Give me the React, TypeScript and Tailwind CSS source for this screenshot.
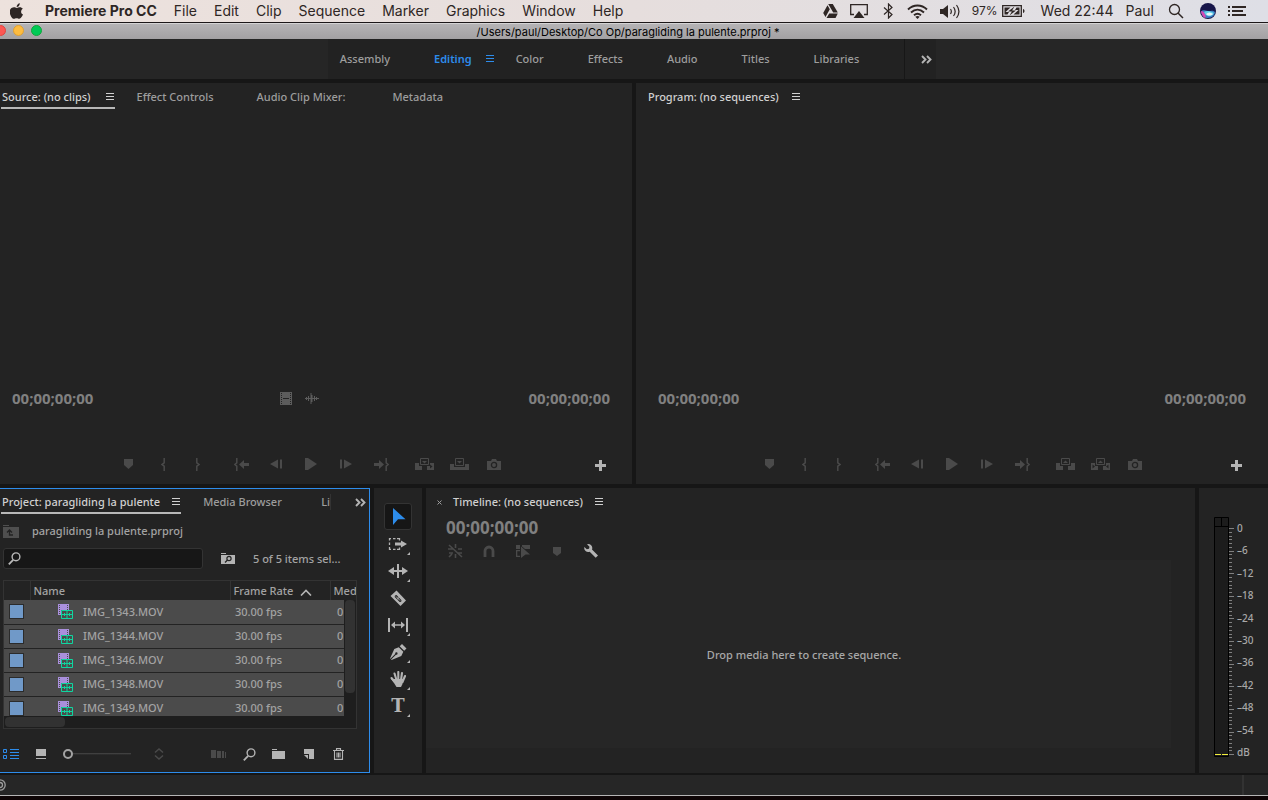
import React from 'react';

type IconProps = { w: number; h: number; className?: string; children: React.ReactNode };

const Icon = ({ w, h, className = '', children }: IconProps) => (
  <svg width={w} height={h} viewBox={`0 0 ${w} ${h}`} fill="currentColor" aria-hidden="true" className={`shrink-0 ${className}`}>
    {children}
  </svg>
);

/* ---------- small shared glyphs ---------- */

const Burger = ({ className = '' }: { className?: string }) => (
  <Icon w={8} h={8} className={className}>
    <path d="M0 0h8v1H0zM0 3h8v1H0zM0 6h8v1H0z" />
  </Icon>
);

const Chevrons = () => (
  <Icon w={11} h={9} className="text-[#b4b4b4]">
    <path d="M1 1l3.5 3.5L1 8M6 1l3.5 3.5L6 8" fill="none" stroke="currentColor" strokeWidth="1.9" />
  </Icon>
);

const Marker = () => (
  <Icon w={9} h={10}>
    <path d="M0 0h9v6L4.5 10 0 6z" />
  </Icon>
);

const MarkIn = () => (
  <Icon w={4} h={13}>
    <path d="M3.2 0v4.8L1 6.5l2.2 1.7V13" fill="none" stroke="currentColor" strokeWidth="1.5" />
  </Icon>
);

const MarkOut = () => (
  <Icon w={4} h={13}>
    <path d="M.8 0v4.8L3 6.5.8 8.2V13" fill="none" stroke="currentColor" strokeWidth="1.5" />
  </Icon>
);

const GoToIn = () => (
  <Icon w={15} h={13}>
    <path d="M2.8 0v4.8L.8 6.5l2 1.7V13" fill="none" stroke="currentColor" strokeWidth="1.5" />
    <path d="M5 6.5L10 2v3h5v3h-5v3z" />
  </Icon>
);

const GoToOut = () => (
  <Icon w={15} h={13}>
    <path d="M12.2 0v4.8l2 1.7-2 1.7V13" fill="none" stroke="currentColor" strokeWidth="1.5" />
    <path d="M10 6.5L5 2v3H0v3h5v3z" />
  </Icon>
);

const StepBack = () => (
  <Icon w={12} h={10}>
    <path d="M0 5l8-4.500v9zM10 .500h2v9h-2z" />
  </Icon>
);

const StepForward = () => (
  <Icon w={12} h={10}>
    <path d="M12 5L4 .500v9zM0 .500h2v9H0z" />
  </Icon>
);

const Play = () => (
  <Icon w={12} h={12}>
    <path d="M0 0h3l9 6-9 6H0z" />
  </Icon>
);

const Insert = () => (
  <Icon w={19} h={12}>
    <path d="M0 5h4v3h3v4H0zM12 8h3V5h4v7h-7z" />
    <path d="M5.500.500h8v6h-8z" fill="none" stroke="currentColor" />
    <path d="M7 3h5L9.500 5.500z" />
    <path d="M15 6.500v4l2.500-2z" fill="#232323" />
  </Icon>
);

const Overwrite = () => (
  <Icon w={19} h={12}>
    <path d="M0 6h4v3h11V6h4v6H0z" />
    <path d="M5.500.500h8v7h-8z" fill="none" stroke="currentColor" />
    <path d="M7 3h5L9.500 5.500z" />
  </Icon>
);

const Lift = () => (
  <Icon w={19} h={12}>
    <path d="M0 5h4v3h3v4H0zM12 8h3V5h4v7h-7z" />
    <path d="M5.500.500h8v6h-8z" fill="none" stroke="currentColor" />
    <path d="M7 5h5L9.500 2.500z" />
  </Icon>
);

const Extract = () => (
  <Icon w={19} h={12}>
    <path d="M0 5h4v3h3v4H0zM12 8h3V5h4v7h-7z" />
    <path d="M5.500.500h8v6h-8z" fill="none" stroke="currentColor" />
    <path d="M7 5h5L9.500 2.500z" />
    <path d="M1.500 6.500v4L4 8.500zM17.500 6.500v4L15 8.500z" fill="#232323" />
  </Icon>
);

const Camera = () => (
  <Icon w={14} h={11}>
    <path d="M0 2h4l1-2h4l1 2h4v9H0z" />
    <circle cx="7" cy="6" r="2.600" fill="none" stroke="#232323" strokeWidth="1.300" />
  </Icon>
);

const Plus = () => (
  <Icon w={11} h={11}>
    <path d="M4 0h3v4h4v3H7v4H4V7H0V4h4z" />
  </Icon>
);

const FilmStrip = () => (
  <Icon w={12} h={13} className="text-[#5c5c5c]">
    <path d="M0 0h12v13H0z" />
    <path d="M1.500 1v11M10.500 1v11" stroke="#232323" strokeDasharray="1 1" />
    <path d="M3 6h6v1H3z" fill="#232323" />
  </Icon>
);

const Waveform = () => (
  <Icon w={14} h={11} className="text-[#5c5c5c]">
    <path d="M0 5h14v1H0zM1 4h1v3H1zM3 3h1v5H3zM5.500 0h1v11h-1zM6.500 2h1v7h-1zM9 3h1v5H9zM11 4h1v3h-1z" />
  </Icon>
);

/* ---------- mac menu bar ---------- */

const AppleLogo = () => (
  <Icon w={14} h={16}>
    <path d="M9.800.200c.1 1.100-.3 2-.9 2.700-.600.700-1.400 1.100-2.200 1C6.600 2.900 7 2 7.600 1.400 8.200.700 9.100.300 9.800.200zM13 11.500c-.4.900-.6 1.300-1.100 2-.7 1.100-1.600 2.300-2.700 2.300-1 0-1.300-.6-2.600-.6s-1.700.6-2.700.6c-1.100 0-2-1.100-2.700-2.100C-.6 10.900-.8 7.800.500 6.100c.8-1.200 2.100-1.900 3.400-1.900 1.200 0 2 .7 3 .7s1.600-.7 3-.7c1.100 0 2.200.6 3 1.600-2.600 1.500-2.200 5 .1 5.700z" />
  </Icon>
);

const menus = ['File', 'Edit', 'Clip', 'Sequence', 'Marker', 'Graphics', 'Window', 'Help'];

const MenuBar = () => (
  <header className="flex h-[23px] items-center justify-between border-b border-[#1c1718] bg-linear-to-r from-[#ede2dd] via-[#e6dedd] to-[#dedfe6] pr-[22px] pl-[10px] font-['Inter',sans-serif] text-sm leading-5 font-normal text-[#2e2624]">
    <nav aria-label="Menu bar" className="flex items-center gap-[17px]">
      <button aria-label="Apple" className="flex w-[18px]"><AppleLogo /></button>
      <button className="font-bold">Premiere Pro CC</button>
      {menus.map((menu) => (
        <button key={menu}>{menu}</button>
      ))}
    </nav>
    <div className="flex items-center gap-3">
      <Icon w={15} h={14}>
        <path d="M5.200 0h4.600l5 8.500h-4.600zM4.500 1.200l2.300 4L2.500 13 .200 9zM6.200 9.500h8.600L12.500 14h-9z" />
      </Icon>
      <Icon w={20} h={14}>
        <path d="M4 10.500H.700V.700h16.600v9.800H14" fill="none" stroke="currentColor" strokeWidth="1.300" />
        <path d="M9 7l5.500 7h-11z" />
      </Icon>
      <Icon w={13} h={16}>
        <path d="M2 4.500l8 7L6.500 15V1L10 4.500l-8 7" fill="none" stroke="currentColor" strokeWidth="1.200" />
      </Icon>
      <Icon w={21} h={15}>
        <path d="M1 5.500c5.500-5.300 13.500-5.300 19 0M4 8.500c4-3.700 9-3.700 13 0M7 11.300c2.200-1.900 4.800-1.900 7 0" fill="none" stroke="currentColor" strokeWidth="1.900" />
        <path d="M10.500 15l-2.200-2.200c1.300-1.100 3.100-1.100 4.400 0z" />
      </Icon>
      <Icon w={20} h={15}>
        <path d="M0 5h3l5-4v13l-5-4H0z" />
        <path d="M10.500 5c1 1.500 1 3.500 0 5M13.500 3c2 2.700 2 6.300 0 9M16.500 1c3 4 3 9 0 13" fill="none" stroke="currentColor" strokeWidth="1.200" />
      </Icon>
      <div className="flex items-center gap-1 pr-1">
        <span className="text-xs">97%</span>
        <Icon w={23} h={12}>
          <path d="M.700 .700h18.600v10.600H.700z" fill="none" stroke="currentColor" strokeWidth="1.300" />
          <path d="M2.500 2.500h6L3.500 7H7l-1.500 2.500h-3zM17.500 9.500h-6L16.500 5H13l1.500-2.500h3zM21 4c2 .5 2 3.500 0 4z" />
          <path d="M12.500 1.500L6 6.500h3.900L7.500 10.500l6.500-5h-3.900z" />
        </Icon>
      </div>
      <span>Wed 22:44</span>
      <span>Paul</span>
      <Icon w={22} h={16}>
        <circle cx="8.500" cy="6.500" r="5" fill="none" stroke="currentColor" strokeWidth="1.300" />
        <path d="M12 10l5 5" stroke="currentColor" strokeWidth="1.500" />
      </Icon>
      <Icon w={16} h={16}>
        <circle cx="8" cy="8" r="8" fill="#17164a" />
        <path d="M1 9c2-3 4-1 7-1s5-1 7 1c0 3-3 6-7 6-3 0-6-2-7-6z" fill="#3b7fc4" />
        <path d="M1 8c2 0 3 1 4 3s1 3 0 4C3 14 1 11 1 8z" fill="#d24bb4" />
        <path d="M4 9c3-2 7-1 10 1-2 4-7 4-9 1z" fill="#62d3e6" />
        <path d="M6 11c2-2 4-2 7 0-2 2-5 2-7 0z" fill="#e8f7fb" />
      </Icon>
      <Icon w={18} h={12}>
        <path d="M0 1h2v2H0zM4 1h14v2H4zM0 5h2v2H0zM4 5h11v2H4zM0 9h2v2H0zM4 9h14v2H4z" />
      </Icon>
    </div>
  </header>
);

const TitleBar = () => (
  <div className="relative flex h-4 items-center justify-center overflow-hidden border-t border-[#d4d3d4] bg-linear-to-b from-[#b5b3b5] to-[#a3a1a3] pr-3 font-['Inter',sans-serif] text-[11px] leading-4 font-normal text-black">
    <div className="absolute top-[1px] -left-[5px] flex gap-[7px]">
      <button aria-label="Close" className="h-[11px] w-[11px] rounded-full border border-[#e0443e] bg-[#fc5753]" />
      <button aria-label="Minimise" className="h-[11px] w-[11px] rounded-full border border-[#dea034] bg-[#fdbc40]" />
      <button aria-label="Zoom" className="h-[11px] w-[11px] rounded-full border border-[#12a63c] bg-[#00ca56]" />
    </div>
    <h1>/Users/paul/Desktop/Co Op/paragliding la pulente.prproj *</h1>
  </div>
);

/* ---------- workspaces ---------- */

const workspaces = ['Assembly', 'Editing', 'Color', 'Effects', 'Audio', 'Titles', 'Libraries'];

const WorkspaceBar = () => (
  <nav aria-label="Workspaces" className="flex h-10 justify-center bg-[#262626] pr-1 text-[#9d9d9d]">
    <div className="flex items-center gap-11 bg-[#222222] pr-[45px] pl-3">
      {workspaces.map((name) =>
        name === 'Editing' ? (
          <button key={name} className="relative font-semibold text-[#2d8ceb]">
            {name}
            <Burger className="absolute top-1 -right-[22px]" />
          </button>
        ) : (
          <button key={name}>{name}</button>
        )
      )}
    </div>
    <button aria-label="More workspaces" className="flex items-center border-l border-[#171717] bg-[#222222] pr-1 pl-4">
      <Chevrons />
    </button>
  </nav>
);

/* ---------- monitors ---------- */

const Timecode = ({ large = false }: { large?: boolean }) => (
  <span className={`font-['Open_Sans',sans-serif] font-bold text-[#808080] ${large ? 'text-[17px] leading-5' : 'text-[15px] leading-5'}`}>
    00;00;00;00
  </span>
);

type Control = [label: string, Glyph: () => React.ReactElement];

const sharedControls: Control[][] = [
  [['Add Marker', Marker], ['Mark In', MarkIn], ['Mark Out', MarkOut]],
  [['Go to In', GoToIn], ['Step Back', StepBack], ['Play', Play], ['Step Forward', StepForward], ['Go to Out', GoToOut]],
];
const sourceControls: Control[][] = [...sharedControls, [['Insert', Insert], ['Overwrite', Overwrite], ['Export Frame', Camera]]];
const programControls: Control[][] = [...sharedControls, [['Lift', Lift], ['Extract', Extract], ['Export Frame', Camera]]];

const Transport = ({ groups, className = '' }: { groups: Control[][]; className?: string }) => (
  <div className="grid grid-cols-[1fr_auto_1fr] items-center pt-[46px] pb-[10px]">
    <div />
    <div className={`flex gap-2 text-[#4a4a4a] ${className}`}>
      {groups.map((group, i) => (
        <div key={i} className="flex">
          {group.map(([label, Glyph]) => (
            <button key={label} aria-label={label} className="flex h-5 w-[35px] items-center justify-center">
              <Glyph />
            </button>
          ))}
        </div>
      ))}
    </div>
    <button aria-label="Button Editor" className="justify-self-end pt-[3px] pr-[26px] text-[#b4b4b4]">
      <Plus />
    </button>
  </div>
);

const SourceMonitor = () => (
  <section aria-label="Source" className="flex flex-1 flex-col bg-[#232323]">
    <div className="flex items-start pt-[6px] pl-px text-[#9d9d9d]">
      <button className="flex h-5 items-center gap-[15px] border-b-2 border-[#b8b8b8] px-px pb-[3px] text-[#d0d0d0]">
        Source: (no clips)
        <Burger />
      </button>
      <button className="ml-[22px]">Effect Controls</button>
      <button className="ml-[43px]">Audio Clip Mixer:</button>
      <button className="ml-[47px]">Metadata</button>
    </div>
    <div className="mt-auto flex items-center justify-between pr-[22px] pl-3">
      <Timecode />
      <div className="mr-6 flex items-center gap-[13px]">
        <FilmStrip />
        <Waveform />
      </div>
      <Timecode />
    </div>
    <Transport groups={sourceControls} className="mr-[10px]" />
  </section>
);

const ProgramMonitor = () => (
  <section aria-label="Program" className="flex flex-1 flex-col bg-[#232323]">
    <div className="flex pt-[6px] pl-3 text-[#d0d0d0]">
      <button className="flex items-center gap-[13px]">
        Program: (no sequences)
        <Burger />
      </button>
    </div>
    <div className="mt-auto flex items-center justify-between pr-[22px] pl-[22px]">
      <Timecode />
      <Timecode />
    </div>
    <Transport groups={programControls} />
  </section>
);

/* ---------- project panel ---------- */

const clips = ['IMG_1343.MOV', 'IMG_1344.MOV', 'IMG_1346.MOV', 'IMG_1348.MOV', 'IMG_1349.MOV'];

const ClipIcon = () => (
  <Icon w={15} h={15}>
    <path d="M0 0h11v11H0z" fill="#a98fdc" />
    <path d="M1.500 1v10M9.500 1v5" stroke="#4b4b4b" strokeDasharray="1 1" />
    <path d="M3 6h8v6H3z" fill="#4b4b4b" />
    <path d="M3.500 6.500h11v8h-11zM3.500 10.500h11M6.500 9v3M9 7v7M11.500 9v3" fill="none" stroke="#0fd6a0" />
  </Icon>
);

const SearchGlyph = () => (
  <Icon w={13} h={13}>
    <circle cx="8" cy="4.800" r="3.900" fill="none" stroke="currentColor" strokeWidth="1.400" />
    <path d="M5.200 7.800L.8 12.300" stroke="currentColor" strokeWidth="1.800" />
  </Icon>
);

const ClipTable = () => (
  <div className="relative mt-[11px] mr-3 ml-[3px] h-[149px] overflow-hidden border border-[#333333] bg-[#1e1e1e]">
    <div className="h-[135px] overflow-hidden">
      <table className="w-full table-fixed border-collapse text-left text-[#a3a3a3]">
        <thead className="bg-[#232323]">
          <tr className="h-[19px]">
            <th aria-label="Label" className="w-[26px] border-r border-[#333333]" />
            <th className="w-[200px] border-r border-[#333333] pl-[3px] leading-[18px] font-medium">Name</th>
            <th className="w-[100px] border-r border-[#333333] pl-[3px] leading-[18px] font-medium">
              <span className="flex items-center gap-[7px]">
                Frame Rate
                <Icon w={12} h={7} className="mt-1">
                  <path d="M1 6.500l5-5 5 5" fill="none" stroke="#b4b4b4" strokeWidth="1.600" />
                </Icon>
              </span>
            </th>
            <th className="overflow-hidden pl-[3px] leading-[18px] font-medium">Med</th>
          </tr>
        </thead>
        <tbody className="bg-[#4b4b4b]">
          {clips.map((clip) => (
            <tr key={clip} className="h-6 border-b border-[#232323]">
              <td className="pl-[5px]">
                <div className="h-[15px] w-[15px] border border-[#2b2b2b] bg-[#7099c8]" />
              </td>
              <td>
                <span className="flex items-center gap-[10px] pl-7">
                  <ClipIcon />
                  {clip}
                </span>
              </td>
              <td className="pl-[5px]">30.00 fps</td>
              <td className="pl-[7px]">0</td>
            </tr>
          ))}
        </tbody>
      </table>
    </div>
    {/* scrollbars ride over the list */}
    <div className="absolute top-[19px] right-0 bottom-0 w-3 bg-[#1e1e1e]">
      <div className="mx-px h-[93px] rounded bg-[#323232]" />
    </div>
    <div className="absolute bottom-px left-px h-[10px] w-[60px] rounded bg-[#323232]" />
  </div>
);

const ProjectPanel = () => (
  <section aria-label="Project" className="flex w-[370px] shrink-0 flex-col border-y border-r border-[#2d8ceb] bg-[#232323]">
    <div className="flex items-start pt-[5px] pl-px text-[#9d9d9d]">
      <button className="flex h-5 items-center gap-3 border-b-2 border-[#b8b8b8] px-px pb-[3px] text-[#d0d0d0]">
        Project: paragliding la pulente
        <Burger />
      </button>
      <button className="ml-[22px]">Media Browser</button>
      <button className="mr-6 ml-auto border-r border-[#333333]">Li</button>
      <button aria-label="More panels" className="flex h-4 w-[14px] items-center">
        <Chevrons />
      </button>
    </div>
    <div className="flex items-center gap-[13px] pt-[9px] pl-[3px] text-[#a3a3a3]">
      <Icon w={16} h={13} className="text-[#4f4f4f]">
        <path d="M0 0h6v1H0zM0 2h16v11H0z" />
        <path d="M10 10H6.500V5.500M4 7.500l2.500-2.500L9 7.500" fill="none" stroke="#232323" strokeWidth="1.300" />
      </Icon>
      paragliding la pulente.prproj
    </div>
    <div className="mt-[9px] flex items-center pl-[3px] text-[#a3a3a3]">
      <label className="flex h-[21px] w-[200px] items-center rounded-[3px] border border-[#333333] bg-[#171717] pl-1 text-[#b8b8b8]">
        <SearchGlyph />
        <input aria-label="Search project" className="w-full min-w-0 bg-transparent px-1 outline-none" />
      </label>
      <button aria-label="Create search bin" className="mr-[18px] ml-[18px] text-[#b4b4b4]">
        <Icon w={14} h={11}>
          <path d="M0 0h5v1H0zM0 2h14v9H0z" />
          <circle cx="8" cy="5.500" r="2.100" fill="none" stroke="#232323" strokeWidth="1.200" />
          <path d="M6.500 7L4 9.500" stroke="#232323" strokeWidth="1.300" />
        </Icon>
      </button>
      <span>5 of 5 items sel...</span>
    </div>
    <ClipTable />
    <div className="mt-[15px] mb-2 flex h-5 items-center pr-[25px] pl-[3px] text-[#b4b4b4]">
      <button aria-label="List View" className="text-[#2d8ceb]">
        <Icon w={16} h={10}>
          <path d="M.5.500h3v3h-3zM.500 6.500h3v3h-3z" fill="none" stroke="currentColor" />
          <path d="M7 0h9v1H7zM7 3h9v1H7zM7 6h9v1H7zM7 9h9v1H7z" />
        </Icon>
      </button>
      <button aria-label="Icon View" className="ml-[17px]">
        <Icon w={10} h={10}>
          <path d="M0 0h10v7H0zM0 9h10v1H0z" />
        </Icon>
      </button>
      <input
        type="range"
        aria-label="Thumbnail size"
        defaultValue={0}
        className="ml-[17px] h-[10px] w-[68px] appearance-none bg-linear-to-b from-transparent from-40% via-[#4a4a4a] via-40% to-transparent to-60% [&::-webkit-slider-thumb]:h-[10px] [&::-webkit-slider-thumb]:w-[10px] [&::-webkit-slider-thumb]:appearance-none [&::-webkit-slider-thumb]:rounded-full [&::-webkit-slider-thumb]:border-2 [&::-webkit-slider-thumb]:border-[#a3a3a3] [&::-webkit-slider-thumb]:bg-[#232323]"
      />
      <button aria-label="Sort Icons" className="ml-[23px] text-[#4a4a4a]">
        <Icon w={10} h={12}>
          <path d="M1 4.500L5 1l4 3.500M1 7.500L5 11l4-3.500" fill="none" stroke="currentColor" strokeWidth="1.500" />
        </Icon>
      </button>
      <button aria-label="Automate to Sequence" className="ml-auto text-[#4a4a4a]">
        <Icon w={15} h={8}>
          <path d="M0 0h5v8H0zM6 1h4v7H6zM11 1h2v7h-2zM14 2h1v6h-1z" />
        </Icon>
      </button>
      <button aria-label="Find" className="ml-[17px]"><SearchGlyph /></button>
      <button aria-label="New Bin" className="ml-[16px]">
        <Icon w={13} h={10}>
          <path d="M0 0h5v1H0zM0 2h13v8H0z" />
        </Icon>
      </button>
      <button aria-label="New Item" className="ml-[19px]">
        <Icon w={10} h={10}>
          <path d="M0 0h10v10H5V5H0z" />
          <path d="M0 6h4v4z" />
        </Icon>
      </button>
      <button aria-label="Clear" className="ml-[19px]">
        <Icon w={11} h={12}>
          <path d="M0 2.500h11M3.500 2V.600h4V2M1.500 3v8.400h8V3M4 4.500v5M5.500 4.500v5M7 4.500v5" fill="none" stroke="currentColor" strokeWidth="1.100" />
        </Icon>
      </button>
    </div>
  </section>
);

/* ---------- tools ---------- */

const tools: { name: string; flyout: boolean; glyph: React.ReactNode }[] = [
  {
    name: 'Selection Tool',
    flyout: false,
    glyph: (
      <Icon w={20} h={18} className="text-[#2d8ceb]">
        <path d="M5 0l12.500 11.200H10L5 17z" />
      </Icon>
    ),
  },
  {
    name: 'Track Select Forward Tool',
    flyout: true,
    glyph: (
      <Icon w={20} h={12}>
        <path d="M3 .500H1.500v2M1.500 4.500v2.500M1.500 9v2.500H3M5 .500h2.500M9 .500h2.500v2M5 11.500h2.500M9 11.500h2.500V9.500" fill="none" stroke="currentColor" strokeWidth="1.300" />
        <path d="M7 4.500h6V2.500l6 3.500-6 3.500V7.500H7z" />
      </Icon>
    ),
  },
  {
    name: 'Ripple Edit Tool',
    flyout: true,
    glyph: (
      <Icon w={20} h={14}>
        <path d="M9 0h2v14H9zM0 7l6-4v3h3v2H6v3zM20 7l-6-4v3h-3v2h3v3z" />
      </Icon>
    ),
  },
  {
    name: 'Razor Tool',
    flyout: false,
    glyph: (
      <Icon w={18} h={16}>
        <path d="M7.500 .500L17 10.500 11.500 16 1.500 6z" />
        <path d="M6 5.500l1.500-.5 5 5.200-.3 1.500-1.500.3-5-5z" fill="#232323" />
        <path d="M7 6.500l4 4M10.200 7.200L8 9.500" stroke="#b4b4b4" />
      </Icon>
    ),
  },
  {
    name: 'Slip Tool',
    flyout: true,
    glyph: (
      <Icon w={20} h={14}>
        <path d="M0 0h2v14H0zM18 0h2v14h-2zM3 7l4-3.500v2.800h6V3.500L17 7l-4 3.500V7.700H7v2.800z" />
      </Icon>
    ),
  },
  {
    name: 'Pen Tool',
    flyout: true,
    glyph: (
      <Icon w={17} h={16}>
        <path d="M12 0l4.500 4.500-2.300 2.300L9.700 2.300zM8.800 3.200l4.500 4.500-2 4.300L1.500 16l-.4-.4L6 10.700a1.200 1.200 0 10-.8-.8L.400 14.800 0 14.500 4.300 5z" />
      </Icon>
    ),
  },
  {
    name: 'Hand Tool',
    flyout: true,
    glyph: (
      <Icon w={17} h={16}>
        <path d="M1.500 7l3.500 4M4.500 2.500L6.500 9M8.300 1v8M12 2l-1 7M15 5l-2.500 6" fill="none" stroke="currentColor" strokeWidth="2.100" strokeLinecap="round" />
        <path d="M5 8h8.300l-.8 5-1.500 3H6.500L4 12 1 8z" />
      </Icon>
    ),
  },
  {
    name: 'Type Tool',
    flyout: true,
    glyph: <span className="font-['DejaVu_Serif',serif] text-lg leading-5 font-bold">T</span>,
  },
];

const ToolsPanel = () => (
  <section aria-label="Tools" className="flex w-12 shrink-0 flex-col items-center bg-[#232323] pt-[15px] text-[#b4b4b4]">
    {tools.map(({ name, flyout, glyph }, i) => (
      <button
        key={name}
        aria-label={name}
        className={`relative flex h-[27px] w-7 items-center justify-center ${i === 0 ? 'rounded-[3px] border border-[#333333] bg-[#161616]' : ''}`}
      >
        {glyph}
        {flyout && (
          <Icon w={3} h={3} className="absolute right-[2px] bottom-[2px]">
            <path d="M3 0v3H0z" />
          </Icon>
        )}
      </button>
    ))}
  </section>
);

/* ---------- timeline ---------- */

const TimelinePanel = () => (
  <section aria-label="Timeline" className="flex min-w-0 flex-1 flex-col bg-[#232323]">
    <div className="flex items-center pt-[6px] pl-[11px] text-[#d0d0d0]">
      <button aria-label="Close panel" className="mr-[11px] text-[#9d9d9d]">
        <Icon w={5} h={5}>
          <path d="M.500.500l4 4M4.500.500l-4 4" stroke="currentColor" />
        </Icon>
      </button>
      <button className="flex items-center gap-3">
        Timeline: (no sequences)
        <Burger />
      </button>
    </div>
    <div className="pt-2 pl-5">
      <Timecode large />
    </div>
    <div className="flex h-[22px] items-center pt-1 pl-[22px] text-[#4a4a4a]">
      <button aria-label="Nest sequences">
        <Icon w={15} h={14}>
          <path d="M7.500 0v4M7.500 10v4M0 5h5M1 9h4M10 5h4M10 9h4M1 1l13 12M4 10l-3 3" fill="none" stroke="currentColor" strokeWidth="1.600" />
        </Icon>
      </button>
      <button aria-label="Snap" className="ml-[20px]">
        <Icon w={12} h={12}>
          <path d="M2 12V6a4 4 0 018 0v6" fill="none" stroke="currentColor" strokeWidth="2.800" />
        </Icon>
      </button>
      <button aria-label="Linked Selection" className="ml-[21px]">
        <Icon w={15} h={13}>
          <path d="M0 0h4v4H0zM6 0h8v4H9L6 1.500zM0 5h4v1.300H1.300v4.400H4V12H0zM5 1.500l9 8H9.500L5 13z" />
        </Icon>
      </button>
      <button aria-label="Add Marker" className="ml-[22px]">
        <Icon w={8} h={9}>
          <path d="M0 0h8v6L4 9 0 6z" />
        </Icon>
      </button>
      <button aria-label="Timeline Display Settings" className="ml-[23px] text-[#b4b4b4]">
        <Icon w={14} h={14}>
          <path d="M3 .300a4 4 0 015 5.200l6 6-2.300 2.300-6-6A4 4 0 01.400 3l2.400 2.200L5 4.700l.500-2z" />
        </Icon>
      </button>
    </div>
    <div className="mr-6 mb-[25px] flex flex-1 items-center justify-center bg-[#262626] pt-px pl-[11px] text-[#a8a8a8]">
      Drop media here to create sequence.
    </div>
  </section>
);

/* ---------- audio meters ---------- */

const levels = ['0', '-6', '-12', '-18', '-24', '-30', '-36', '-42', '-48', '-54', 'dB'];
const ticks = Array.from({ length: 61 }, (_, db) => ({ db, y: 11 + Math.round(db * 3.77) }));

const MeterPanel = () => (
  <section aria-label="Audio Meters" className="flex w-[69px] shrink-0 items-start bg-[#232323] pt-[29px] pl-[15px]">
    <svg width="21" height="240" viewBox="0 0 21 240" aria-hidden="true">
      <path d="M.500.500h14v239H.500zM.500 9.500h14M7.500 0v9" fill="#1c1c1c" stroke="#000000" />
      <path d="M1 237h6v1H1zM8 237h6v1H8z" fill="#f3ef3c" />
      {ticks.map(({ db, y }) => (
        <rect key={db} x="15" y={y} width={db % 6 === 0 ? 5 : 3} height="1" fill="#808080" />
      ))}
    </svg>
    <div className="mt-[5px] ml-[2px] flex h-[236px] flex-col justify-between text-[10px] leading-3 text-[#a8a8a8]">
      {levels.map((level) => (
        <span key={level}>{level.replace('-', '–')}</span>
      ))}
    </div>
  </section>
);

const App = () => {
  return (
    <div className="flex min-h-screen flex-col overflow-x-hidden bg-[#161616] font-['Noto_Sans',sans-serif] text-[11px] leading-4 font-medium">
      <MenuBar />
      <TitleBar />
      <WorkspaceBar />
      <main className="mt-1 flex flex-1 flex-col gap-1">
        <div className="flex flex-1 gap-1">
          <SourceMonitor />
          <ProgramMonitor />
        </div>
        <div className="flex gap-1">
          <ProjectPanel />
          <ToolsPanel />
          <TimelinePanel />
          <MeterPanel />
        </div>
      </main>
      <footer className="mt-[2px] flex h-[25px] items-stretch justify-between border-b-4 border-[#0e0506] bg-[#262626]">
        <div className="flex flex-1 items-center justify-between border-b border-[#b5b5b5]">
          <button aria-label="Creative Cloud status">
            <Icon w={8} h={12} className="text-[#9d9d9d]">
              <path d="M0 .800a5.200 5.200 0 010 10.400M0 3.500a2.500 2.500 0 010 5" fill="none" stroke="currentColor" strokeWidth="1.300" />
            </Icon>
          </button>
          <div className="mr-6 w-[2px] self-stretch bg-[#323232]" />
        </div>
      </footer>
    </div>
  );
};

export default App;
